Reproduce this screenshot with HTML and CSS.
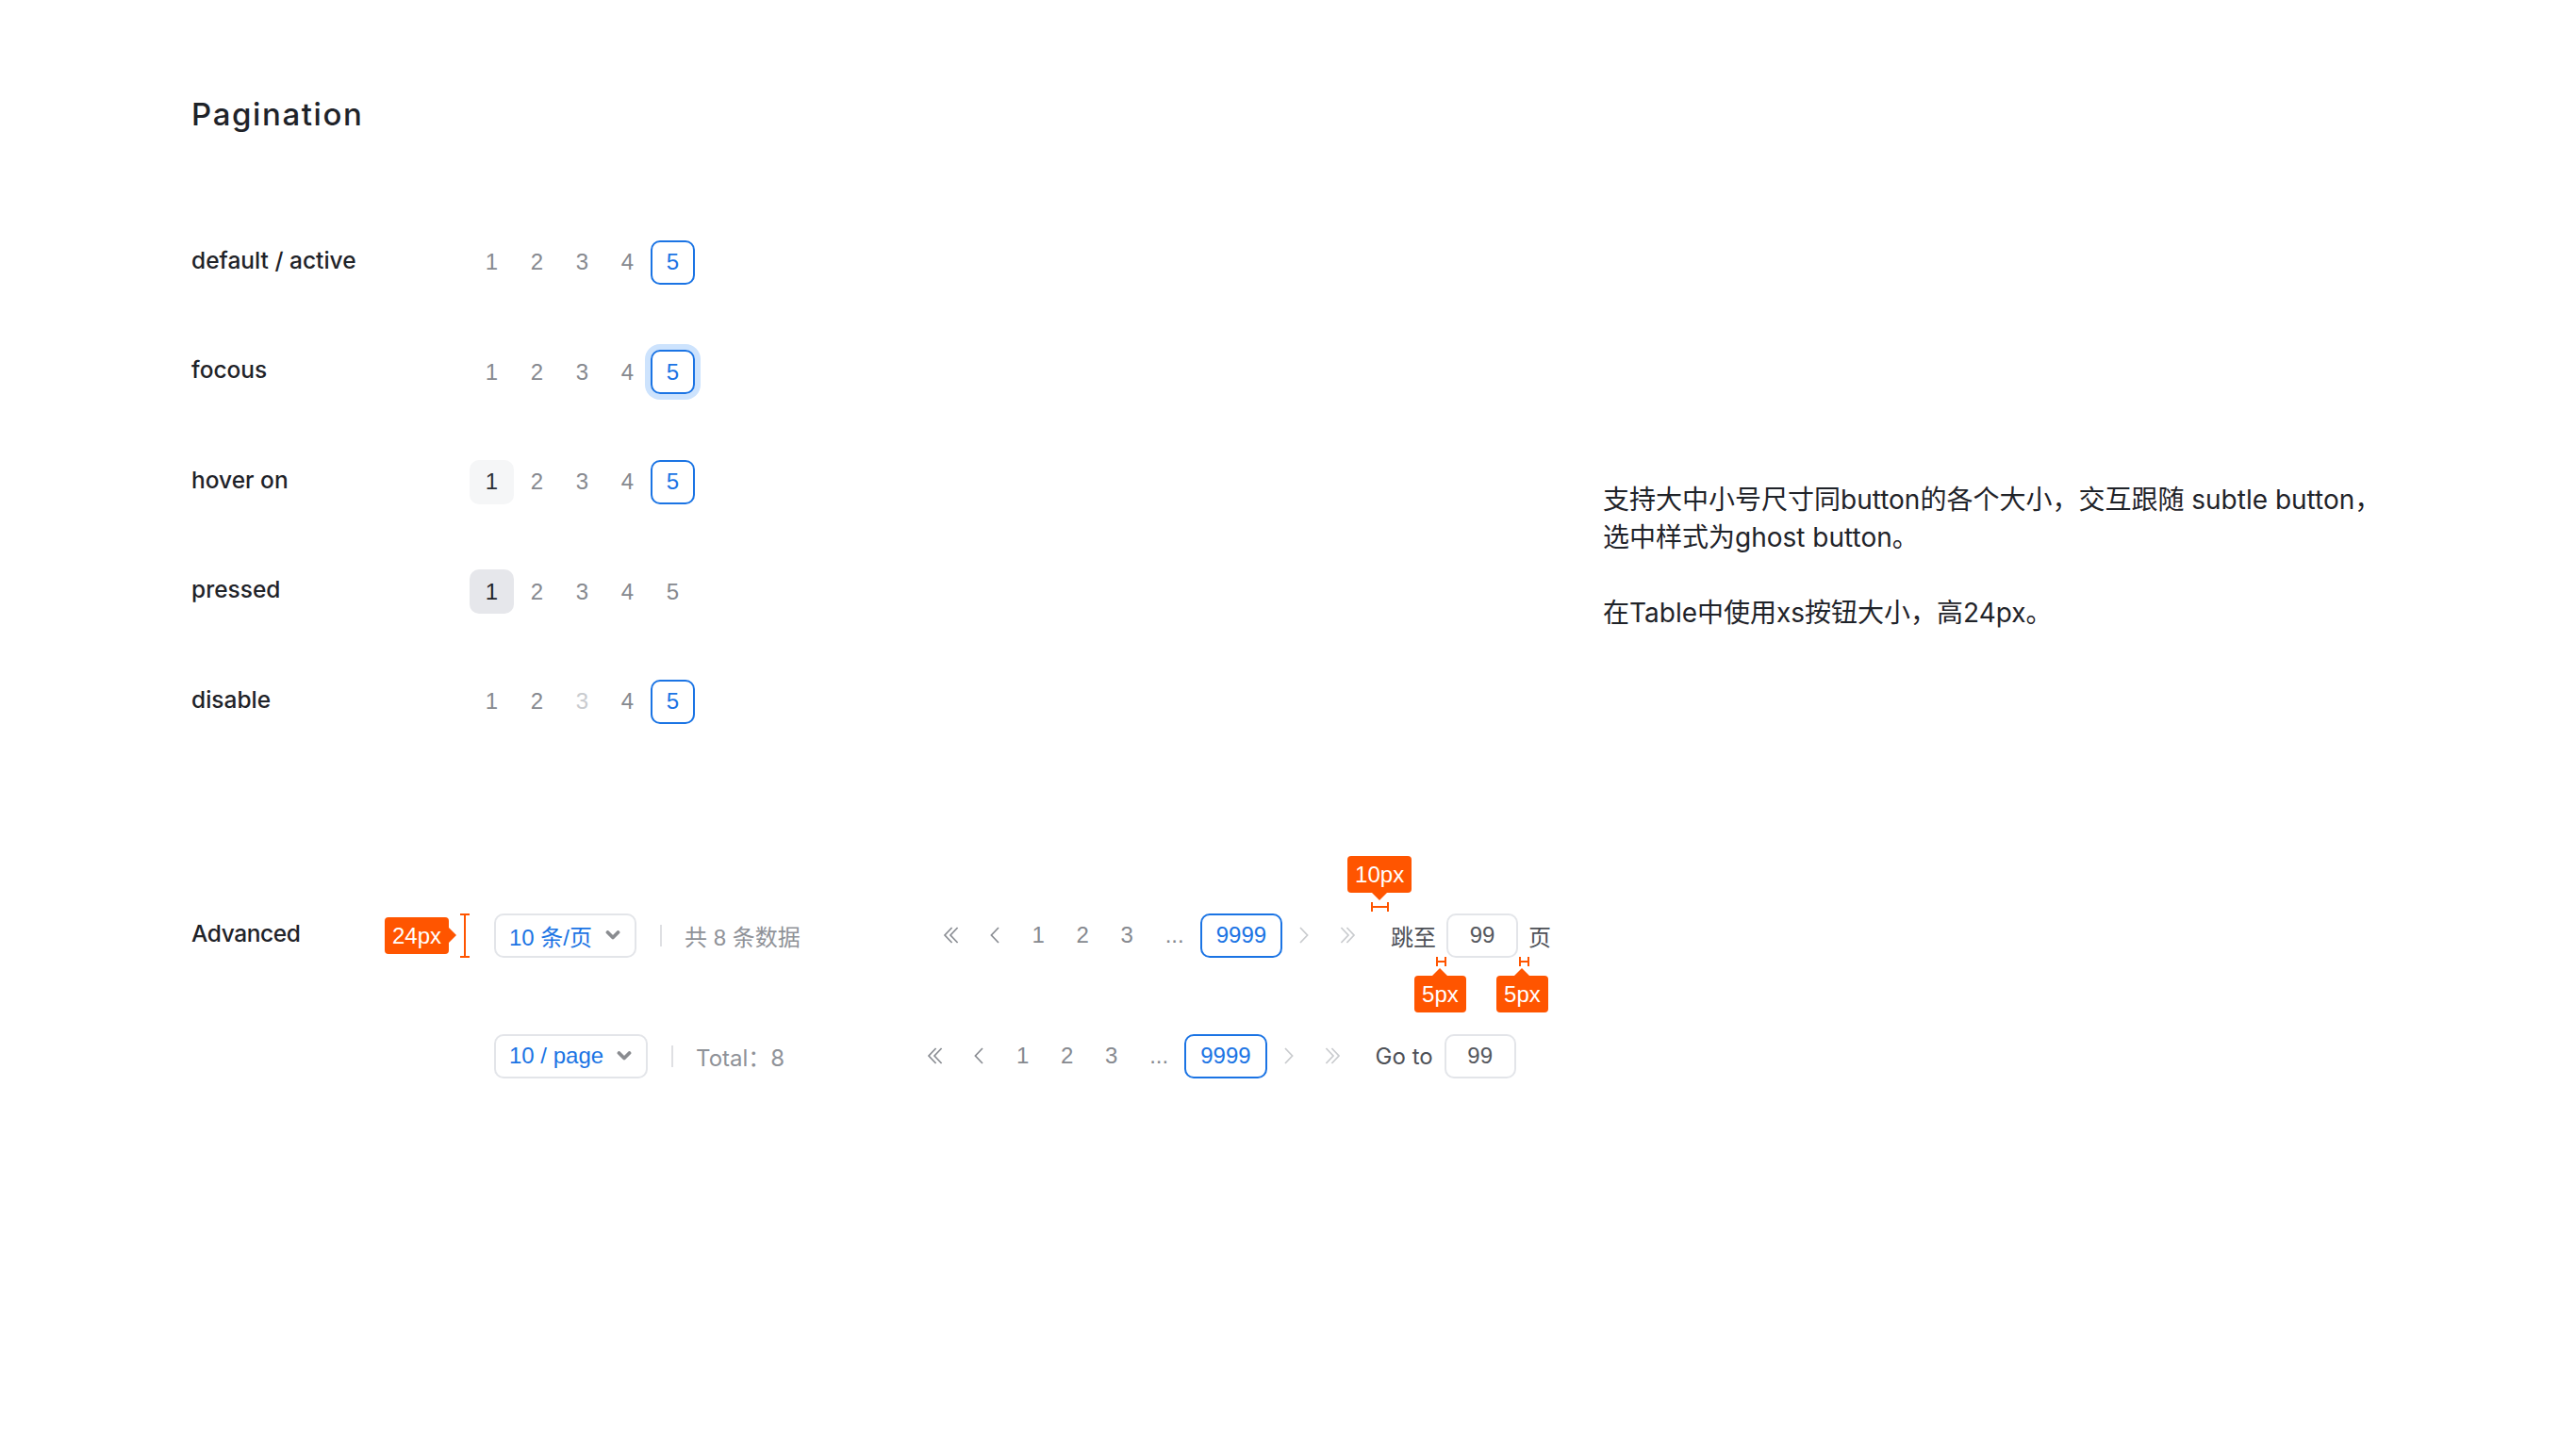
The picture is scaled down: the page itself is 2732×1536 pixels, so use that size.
FILE: index.html
```html
<!DOCTYPE html>
<html lang="zh-CN">
<head>
<meta charset="utf-8">
<title>Pagination</title>
<link rel="stylesheet" href="styles.css">
</head>
<body>
<div class="page">
  <div class="main">
    <h1 class="title">Pagination</h1>

    <div class="states">
      <div class="state-row">
        <div class="label">default / active</div>
        <div class="pager">
          <span class="pg">1</span><span class="pg">2</span><span class="pg">3</span><span class="pg">4</span><span class="pg pg-active">5</span>
        </div>
      </div>
      <div class="state-row">
        <div class="label">focous</div>
        <div class="pager">
          <span class="pg">1</span><span class="pg">2</span><span class="pg">3</span><span class="pg">4</span><span class="pg pg-active pg-focus">5</span>
        </div>
      </div>
      <div class="state-row">
        <div class="label">hover on</div>
        <div class="pager">
          <span class="pg pg-hover">1</span><span class="pg">2</span><span class="pg">3</span><span class="pg">4</span><span class="pg pg-active">5</span>
        </div>
      </div>
      <div class="state-row">
        <div class="label">pressed</div>
        <div class="pager">
          <span class="pg pg-pressed">1</span><span class="pg">2</span><span class="pg">3</span><span class="pg">4</span><span class="pg">5</span>
        </div>
      </div>
      <div class="state-row">
        <div class="label">disable</div>
        <div class="pager">
          <span class="pg">1</span><span class="pg">2</span><span class="pg pg-disabled">3</span><span class="pg">4</span><span class="pg pg-active">5</span>
        </div>
      </div>
    </div>

    <div class="advanced">
      <div class="adv-row">
        <div class="label adv-label">Advanced</div>
        <div class="select">
          <span class="anno-vbar"></span>
          <span class="anno-badge anno-left">24px</span>
          <span class="select-text">10 条/页</span>
          <svg class="select-chevron" width="16" height="10" viewBox="0 0 16 10"><polyline points="2.5,2 8,7.5 13.5,2" fill="none" stroke="currentColor" stroke-width="3.8" stroke-linecap="round" stroke-linejoin="round"/></svg>
        </div>
        <span class="divider"></span>
        <span class="total">共 8 条数据</span>
        <div class="nav">
          <span class="nav-arrow"><svg width="18" height="18" viewBox="0 0 18 18"><path d="M9.6 1 L2 9 L9.6 17 M15.6 1 L8 9 L15.6 17" fill="none" stroke="currentColor" stroke-width="1.7"/></svg></span>
          <span class="nav-arrow"><svg width="12" height="18" viewBox="0 0 12 18"><path d="M10 1 L2.4 9 L10 17" fill="none" stroke="currentColor" stroke-width="1.7"/></svg></span>
          <span class="nav-num">1</span>
          <span class="nav-num">2</span>
          <span class="nav-num">3</span>
          <span class="nav-ellipsis">...</span>
          <span class="nav-current">9999</span>
          <span class="nav-arrow nav-off"><svg width="12" height="18" viewBox="0 0 12 18"><path d="M2 1 L9.6 9 L2 17" fill="none" stroke="currentColor" stroke-width="1.7"/></svg></span>
          <span class="nav-arrow nav-off"><svg width="18" height="18" viewBox="0 0 18 18"><path d="M2.4 1 L10 9 L2.4 17 M8.4 1 L16 9 L8.4 17" fill="none" stroke="currentColor" stroke-width="1.7"/></svg></span>
        </div>
        <div class="jumper">
          <span class="anno-hbar anno-gap10"></span>
          <span class="anno-badge anno-up anno-10">10px</span>
          <span class="jump-text">跳至</span>
          <span class="jump-input">99
            <span class="anno-hbar anno-gap5a"></span>
            <span class="anno-badge anno-down anno-5a">5px</span>
            <span class="anno-hbar anno-gap5b"></span>
            <span class="anno-badge anno-down anno-5b">5px</span>
          </span>
          <span class="jump-text">页</span>
        </div>
      </div>

      <div class="adv-row">
        <div class="label adv-label"></div>
        <div class="select">
          <span class="select-text">10 / page</span>
          <svg class="select-chevron" width="16" height="10" viewBox="0 0 16 10"><polyline points="2.5,2 8,7.5 13.5,2" fill="none" stroke="currentColor" stroke-width="3.8" stroke-linecap="round" stroke-linejoin="round"/></svg>
        </div>
        <span class="divider"></span>
        <span class="total total-en">Total：8</span>
        <div class="nav">
          <span class="nav-arrow"><svg width="18" height="18" viewBox="0 0 18 18"><path d="M9.6 1 L2 9 L9.6 17 M15.6 1 L8 9 L15.6 17" fill="none" stroke="currentColor" stroke-width="1.7"/></svg></span>
          <span class="nav-arrow"><svg width="12" height="18" viewBox="0 0 12 18"><path d="M10 1 L2.4 9 L10 17" fill="none" stroke="currentColor" stroke-width="1.7"/></svg></span>
          <span class="nav-num">1</span>
          <span class="nav-num">2</span>
          <span class="nav-num">3</span>
          <span class="nav-ellipsis">...</span>
          <span class="nav-current">9999</span>
          <span class="nav-arrow nav-off"><svg width="12" height="18" viewBox="0 0 12 18"><path d="M2 1 L9.6 9 L2 17" fill="none" stroke="currentColor" stroke-width="1.7"/></svg></span>
          <span class="nav-arrow nav-off"><svg width="18" height="18" viewBox="0 0 18 18"><path d="M2.4 1 L10 9 L2.4 17 M8.4 1 L16 9 L8.4 17" fill="none" stroke="currentColor" stroke-width="1.7"/></svg></span>
        </div>
        <div class="jumper jumper-en">
          <span class="jump-text jump-text-en">Go to</span>
          <span class="jump-input">99</span>
        </div>
      </div>
    </div>
  </div>

  <div class="note">
    <p>支持大中小号尺寸同button的各个大小，交互跟随 subtle button，<br>选中样式为ghost button。</p>
    <p>在Table中使用xs按钮大小，高24px。</p>
  </div>
</div>
</body>
</html>
```

FILE: styles.css
```css
* {
  box-sizing: border-box;
}

html,
body {
  margin: 0;
  background: #ffffff;
}

body {
  font-family: "Liberation Sans", "Noto Sans CJK SC", sans-serif;
  color: #1f2329;
  text-spacing-trim: space-all;
}

.page {
  display: flex;
  align-items: flex-start;
  min-height: 1536px;
  padding: 105px 0 0 203px;
}

.main {
  flex: 0 0 1497px;
}

.title {
  margin: 0;
  font-family: Inter, "Liberation Sans", sans-serif;
  font-weight: 500;
  font-size: 33px;
  line-height: 33px;
  letter-spacing: 1.6px;
  color: #1f2329;
}

/* ---------- state rows ---------- */
.states {
  display: flex;
  flex-direction: column;
  gap: 69.5px;
  margin-top: 116.5px;
}

.state-row {
  display: flex;
  align-items: center;
  height: 47px;
}

.label {
  flex: 0 0 295px;
  margin-bottom: 5px;
  font-family: Inter, "Liberation Sans", sans-serif;
  font-weight: 500;
  font-size: 24.5px;
  color: #1f2329;
  white-space: nowrap;
}

.pager {
  display: flex;
  gap: 1px;
}

.pg {
  display: flex;
  align-items: center;
  justify-content: center;
  width: 47px;
  height: 47px;
  border: 2px solid transparent;
  border-radius: 10px;
  font-size: 24px;
  color: #86898f;
}

.pg-active {
  border-color: #1b74e4;
  color: #1b74e4;
}

.pg-focus {
  box-shadow: 0 0 0 6px #cde3fd;
}

.pg-hover {
  background: #f5f6f7;
  color: #2b2f36;
}

.pg-pressed {
  background: #e6e7eb;
  color: #1f2329;
}

.pg-disabled {
  color: #c9cbcf;
}

/* ---------- advanced ---------- */
.advanced {
  display: flex;
  flex-direction: column;
  gap: 81px;
  margin-top: 201px;
}

.adv-row {
  display: flex;
  align-items: center;
  height: 47px;
}

.adv-label {
  flex: 0 0 321px;
  letter-spacing: -0.4px;
}

.select {
  position: relative;
  display: flex;
  align-items: center;
  gap: 14px;
  height: 47px;
  padding: 0 15px 0 14px;
  border: 2px solid #e3e5e9;
  border-radius: 10px;
  font-size: 24px;
  color: #1b74e4;
  white-space: nowrap;
}

.select-chevron {
  display: block;
  color: #8a8c90;
}

.divider {
  width: 2px;
  height: 23px;
  margin: 0 24px 0 25px;
  background: #dfe0e3;
}

.total {
  font-size: 24px;
  color: #8f9298;
  white-space: nowrap;
}

.total-en {
  font-family: Inter, "Noto Sans CJK SC", sans-serif;
}

.nav {
  display: flex;
  align-items: center;
  margin-left: 137px;
}

.nav-arrow {
  display: flex;
  align-items: center;
  justify-content: center;
  width: 46px;
  height: 47px;
  color: #8a8d93;
}

.nav-arrow svg {
  display: block;
}

.nav-off {
  color: #c9cbce;
}

.nav-num {
  display: flex;
  align-items: center;
  justify-content: center;
  width: 47px;
  height: 47px;
  font-size: 24px;
  color: #86898f;
}

.nav-ellipsis {
  display: flex;
  align-items: center;
  justify-content: center;
  width: 54px;
  height: 47px;
  font-size: 24px;
  color: #86898f;
}

.nav-current {
  display: flex;
  align-items: center;
  justify-content: center;
  height: 47px;
  padding: 0 15px;
  border: 2px solid #1b74e4;
  border-radius: 10px;
  font-size: 24px;
  color: #1b74e4;
}

.jumper {
  position: relative;
  display: flex;
  align-items: center;
  gap: 11px;
  margin-left: 23px;
}

.jumper-en {
  gap: 12px;
}

.jump-text {
  font-size: 24px;
  color: #4e5157;
  white-space: nowrap;
}

.jump-text-en {
  font-family: Inter, "Liberation Sans", sans-serif;
}

.jump-input {
  position: relative;
  display: flex;
  align-items: center;
  justify-content: center;
  width: 76px;
  height: 47px;
  border: 2px solid #e3e5e9;
  border-radius: 10px;
  font-size: 24px;
  color: #55585e;
}

/* ---------- measurement annotations ---------- */
.anno-badge {
  position: absolute;
  height: 39px;
  padding: 0 8px;
  border-radius: 4px;
  background: #ff5500;
  color: #ffffff;
  font-family: "Liberation Sans", sans-serif;
  font-size: 24px;
  line-height: 39px;
  letter-spacing: 0;
  white-space: nowrap;
}

.anno-badge::after {
  content: "";
  position: absolute;
  width: 0;
  height: 0;
  border: 8px solid transparent;
}

.anno-left {
  left: -118px;
  top: 2px;
}

.anno-left::after {
  right: -16px;
  top: 11px;
  border-left-color: #ff5500;
}

.anno-up::after {
  left: 50%;
  bottom: -16px;
  margin-left: -8px;
  border-top-color: #ff5500;
}

.anno-down::after {
  left: 50%;
  top: -16px;
  margin-left: -8px;
  border-bottom-color: #ff5500;
}

.anno-vbar {
  position: absolute;
  left: -38px;
  top: -2px;
  bottom: -2px;
  width: 10px;
  border-top: 2px solid #ff5500;
  border-bottom: 2px solid #ff5500;
}

.anno-vbar::before {
  content: "";
  position: absolute;
  left: 4px;
  top: 0;
  bottom: 0;
  width: 2px;
  background: #ff5500;
}

.anno-hbar {
  position: absolute;
  height: 10px;
  border-left: 2px solid #ff5500;
  border-right: 2px solid #ff5500;
}

.anno-hbar::before {
  content: "";
  position: absolute;
  left: 0;
  right: 0;
  top: 4px;
  height: 2px;
  background: #ff5500;
}

.anno-gap10 {
  left: -21px;
  top: -12px;
  width: 19px;
}

.anno-10 {
  left: -46px;
  top: -61px;
}

.anno-gap5a {
  left: -13px;
  top: 44px;
  width: 11px;
}

.anno-5a {
  left: -36px;
  top: 64px;
}

.anno-gap5b {
  left: 75px;
  top: 44px;
  width: 11px;
}

.anno-5b {
  left: 51px;
  top: 64px;
}

/* ---------- note ---------- */
.note {
  padding-top: 405px;
  font-family: Inter, "Noto Sans CJK SC", sans-serif;
  font-size: 28px;
  line-height: 40px;
  color: #1f2329;
}

.note p {
  margin: 0 0 40px;
  white-space: nowrap;
}
```
